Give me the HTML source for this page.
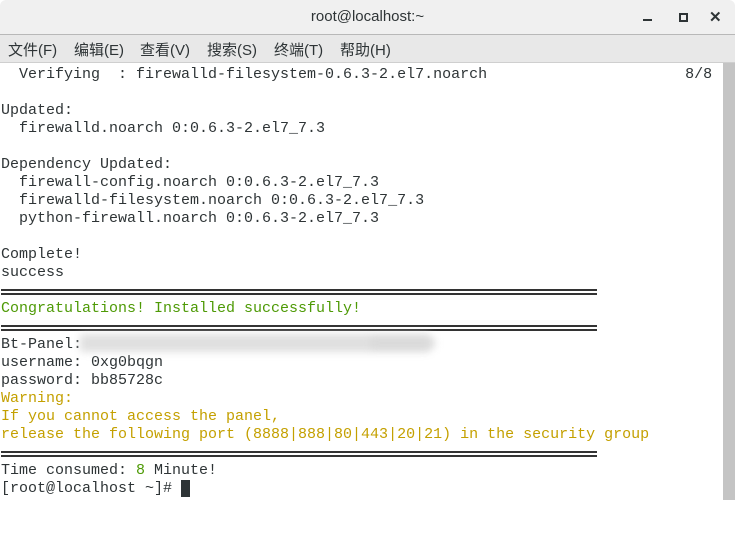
<!DOCTYPE html>
<html><head><meta charset="utf-8"><style>
body{margin:0;width:735px;height:500px;overflow:hidden;background:#fff;position:relative;font-family:"Liberation Sans","Noto Sans CJK SC",sans-serif}
#title{position:absolute;left:0;top:0;width:735px;height:34px;background:#f0f0f0;border-bottom:1px solid #b8b8b8;border-radius:6px 6px 0 0}
#title .t{position:absolute;left:0;right:0;top:8px;text-align:center;font-size:15px;color:#2e3436}
#menu{position:absolute;left:0;top:35px;width:735px;height:27px;background:#e8e8e8;border-bottom:1px solid #cfcfcf;font-size:15px;color:#2e3436}
#menu span{position:absolute;top:4px}
#term{position:absolute;left:1px;top:66px;font-family:"Liberation Mono","DejaVu Sans Mono",monospace;font-size:15px;line-height:18px;white-space:pre;color:#2e3436}
.g{color:#4e9a06}.y{color:#c4a000}
.sep{position:absolute;left:1px;width:596px;height:2px;border-top:2px solid #333;border-bottom:2px solid #333;height:2px}
#sb{position:absolute;left:723px;top:63px;width:12px;height:437px;background:#c4c4c4}
#th{position:absolute;left:725px;top:455px;width:8px;height:40px;background:#7a7a7a;border-radius:4px}
.blur{position:absolute;background:#d8d8d8;filter:blur(4px);opacity:.8}
</style></head><body>
<div id="title"><div class="t">root@localhost:~</div>
<div style="position:absolute;left:643px;top:19px;width:9px;height:2px;background:#2e3436"></div>
<div style="position:absolute;left:679px;top:13px;width:5px;height:5px;border:2px solid #2e3436"></div>
<div style="position:absolute;left:709px;top:8px;font-size:15px;font-weight:bold;color:#2e3436">✕</div>
</div>
<div id="menu"><span style="left:8px">文件(F)</span><span style="left:74px">编辑(E)</span><span style="left:140px">查看(V)</span><span style="left:207px">搜索(S)</span><span style="left:274px">终端(T)</span><span style="left:340px">帮助(H)</span></div>
<div id="term">  Verifying  : firewalld-filesystem-0.6.3-2.el7.noarch                      8/8

Updated:
  firewalld.noarch 0:0.6.3-2.el7_7.3

Dependency Updated:
  firewall-config.noarch 0:0.6.3-2.el7_7.3
  firewalld-filesystem.noarch 0:0.6.3-2.el7_7.3
  python-firewall.noarch 0:0.6.3-2.el7_7.3

Complete!
success

<span class="g">Congratulations! Installed successfully!</span>

Bt-Panel: 
username: 0xg0bqgn
password: bb85728c
<span class="y">Warning:
If you cannot access the panel,
release the following port (8888|888|80|443|20|21) in the security group</span>

Time consumed: <span class="g">8</span> Minute!
[root@localhost ~]# <span style="background:#2e3436">&nbsp;</span></div>
<div class="sep" style="top:289px"></div>
<div class="sep" style="top:325px"></div>
<div class="sep" style="top:451px"></div>
<div class="blur" style="left:80px;top:334px;width:350px;height:18px"></div>
<div class="blur" style="left:370px;top:338px;width:65px;height:10px"></div>
<div id="sb"><div id="th"></div></div>
</body></html>
